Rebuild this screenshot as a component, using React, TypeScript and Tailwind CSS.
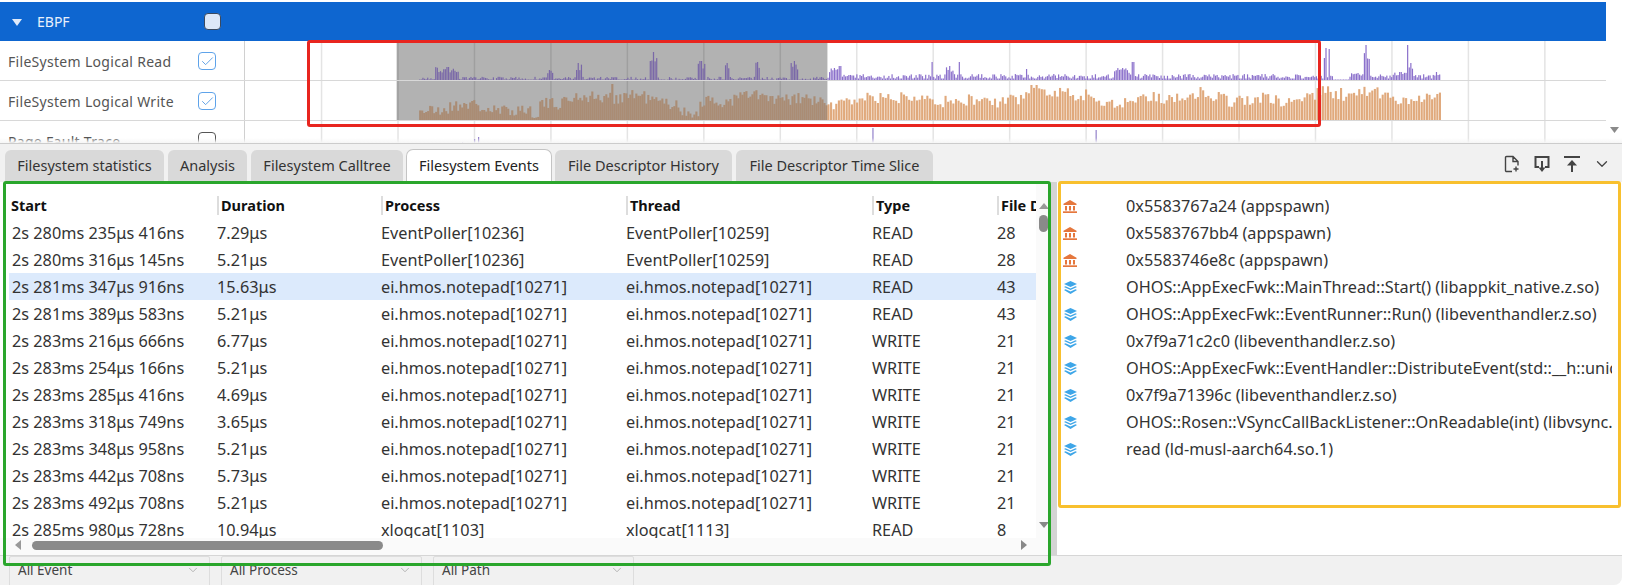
import { Check, ChevronDown } from "lucide-react";

const font = "font-['Noto_Sans','Liberation_Sans',sans-serif]";

// grid lines of the timeline, in page x
const gridXs = Array.from({ length: 17 }, (_, i) => 322.5 + i * 76.4);
const TRACK_LEFT = 246;
const SEL_START = 397.5;
const SEL_END = 828;

function rng(seed: number) {
  let s = seed;
  return () => {
    s = (s + 0x6d2b79f5) | 0;
    let t = Math.imul(s ^ (s >>> 15), 1 | s);
    t = (t + Math.imul(t ^ (t >>> 7), 61 | t)) ^ t;
    return ((t ^ (t >>> 14)) >>> 0) / 4294967296;
  };
}

type Bar = { x: number; h: number };

function readBars(): Bar[] {
  const r = rng(7);
  const bars: Bar[] = [];
  const spikes: [number, number, number][] = [
    [448, 13, 12], [550, 10, 3], [579, 17, 3], [654, 28, 4], [701, 19, 4], [727.5, 17, 2], [758, 18, 2],
    [794, 19, 4], [834, 12, 5], [840, 14, 2], [932, 18, 1], [950, 14, 4], [959, 18, 1], [1027, 11, 1],
    [1122, 12, 8], [1133, 18, 1], [1325, 32, 2], [1329, 31, 1], [1358, 7, 8], [1366, 35, 3], [1400, 8, 8],
    [1407, 35, 1], [1410, 17, 2], [1436, 8, 4],
  ];
  for (let x = 420; x < 1440; x += 1.6) {
    const quiet = x > 1332 && x < 1348;
    let h = x < SEL_END ? (r() < 0.25 ? 0.5 : r() * 3.2) : quiet ? 0.5 : r() < 0.2 ? 1.5 : 2 + r() * 4;
    for (const [sx, sh, w] of spikes) {
      if (Math.abs(x - sx) < w) h = Math.max(h, sh * (0.55 + r() * 0.45));
      if (Math.abs(x - sx) < 1) h = sh;
    }
    bars.push({ x, h });
  }
  return bars;
}

function writeBars(): Bar[] {
  const r = rng(21);
  const bars: Bar[] = [];
  let x = 420;
  while (x < 1440) {
    const slow = Math.sin(x / 23) * 3 + Math.sin(x / 9) * 2.5;
    let base = 23;
    if (x < 470) base = 11;
    else if (x < 540) base = 10;
    else if (x < 680) base = 21;
    else if (x < 700) base = 8;
    else if (x < 830) base = 20;
    else if (x < 1030) base = 21;
    else if (x < 1070) base = 28;
    else if (x < 1320) base = 22;
    else base = 25;
    const h = Math.max(2, base + slow + r() * 13 - 6.5);
    bars.push({ x, h: x > 610 && x < 614 ? 36 : Math.min(h, 35) });
    x += x < SEL_END ? 2 : 2.6;
  }
  return bars;
}

const read = readBars();
const write = writeBars();

function TrackCanvas({
  height,
  bars,
  color,
  dimColor,
  selected,
  barWidth,
}: {
  height: number;
  bars: Bar[];
  color: string;
  dimColor: string;
  selected: boolean;
  barWidth: number;
}) {
  return (
    <svg className="flex-1 block" height={height} viewBox={`${TRACK_LEFT} 0 ${1606 - TRACK_LEFT} ${height}`} preserveAspectRatio="none">
      {gridXs.map((x) => (
        <rect key={x} x={x - 0.75} y={0} width={1.5} height={height} fill="#e4e4e4" />
      ))}
      {selected && <rect x={SEL_START} y={0} width={SEL_END - SEL_START} height={height} fill="#000" opacity={0.3} />}
      {bars.map((b) => (
        <rect key={b.x} x={b.x} y={height - b.h} width={barWidth} height={b.h} fill={selected && b.x < SEL_END ? dimColor : color} />
      ))}
    </svg>
  );
}

function TrackRow({ label, children }: { label: string; children: React.ReactNode }) {
  return (
    <div className="flex h-[40px] border-b border-[#d8d8d8]">
      <div className="w-[245px] shrink-0 border-r border-[#d0d0d0] flex items-center pl-[8px] pt-[2px] relative text-[14px] tracking-[0.3px] text-[#555]">
        <span>{label}</span>
        <span className="absolute left-[198px] top-[11px] w-[18px] h-[18px] rounded-[4px] border border-[#5ea3ea] flex items-center justify-center">
          <Check size={15} strokeWidth={1.4} className="text-[#4f97e2]" />
        </span>
      </div>
      {children}
    </div>
  );
}

function Timeline() {
  return (
    <div className="h-[144px] w-[1622px] bg-white border-b border-[#cccccc] relative overflow-hidden">
      <div className="w-[1606px] pt-[2px]">
        <div className="h-[39px] bg-[#0e66d0] flex items-center relative text-white">
          <svg className="absolute left-[12px] top-[17px]" width="10" height="7" viewBox="0 0 10 7">
            <path d="M0 0h10L5 7z" fill="#dfeafa" />
          </svg>
          <span className="ml-[37px] text-[14px] text-[#e8f0fb]">EBPF</span>
          <span className="absolute left-[204px] top-[11px] w-[17px] h-[17px] rounded-[4px] bg-[#dde8f8] border border-[#3a4a60]" />
        </div>
        <TrackRow label="FileSystem Logical Read">
          <TrackCanvas height={39} bars={read} color="#8b70cb" dimColor="#7a68a8" selected barWidth={1.2} />
        </TrackRow>
        <TrackRow label="FileSystem Logical Write">
          <TrackCanvas height={39} bars={write} color="#e0a97c" dimColor="#aa8c74" selected barWidth={2.1} />
        </TrackRow>
        <div className="flex h-[24px]">
          <div className="w-[245px] shrink-0 border-r border-[#d0d0d0] pl-[8px] relative text-[14px] tracking-[0.3px] text-[#555] pt-[11px] leading-[20px]">
            Page Fault Trace
            <span className="absolute left-[198px] top-[11px] w-[18px] h-[18px] rounded-[4px] border border-[#555]" />
          </div>
          <TrackCanvas
            height={24}
            bars={[
              { x: 463, h: 3 },
              { x: 475, h: 6 },
              { x: 479, h: 8 },
              { x: 873, h: 17 },
              { x: 1096, h: 15 },
            ]}
            color="#7d68c0"
            dimColor="#7d68c0"
            selected={false}
            barWidth={1}
          />
        </div>
      </div>
      <div className="absolute left-0 right-0 bottom-0 h-[5px] bg-gradient-to-b from-transparent to-[#f6f6f6]" />
      <svg className="absolute left-[1610px] top-[127px]" width="9" height="6" viewBox="0 0 9 6">
        <path d="M0 0h9L4.5 6z" fill="#8a8a8a" />
      </svg>
    </div>
  );
}

const tabs = [
  { label: "Filesystem statistics", w: "w-[159px]" },
  { label: "Analysis", w: "w-[79px]" },
  { label: "Filesystem Calltree", w: "w-[152px]" },
  { label: "Filesystem Events", w: "w-[146px]", active: true },
  { label: "File Descriptor History", w: "w-[177px]" },
  { label: "File Descriptor Time Slice", w: "w-[197px]" },
];

function TabBar() {
  return (
    <div className="h-[38px] flex items-end justify-between pl-[5px] pr-[11px]">
      <div className="flex gap-[4px] items-end">
        {tabs.map((t) =>
          t.active ? (
            <div key={t.label} className={`${t.w} h-[33px] -mx-[1px] bg-white border border-b-0 border-[#c4c4c4] rounded-t-[7px] flex items-center justify-center text-[14.5px] text-[#222]`}>
              {t.label}
            </div>
          ) : (
            <div key={t.label} className={`${t.w} h-[32px] bg-[#d9d9d9] rounded-t-[6px] flex items-center justify-center text-[14.5px] text-[#333]`}>
              {t.label}
            </div>
          ),
        )}
      </div>
      <div className="flex items-center gap-[14px] mb-[9px]">
        <svg width="16" height="18" viewBox="0 0 16 18" fill="none" stroke="#444" strokeWidth="1.4">
          <path d="M8 16.5H2.5a1 1 0 0 1-1-1v-13a1 1 0 0 1 1-1H9l5 5v4M9 1.5v5h5" />
          <path d="M12 11.5v5M9.5 14h5" />
        </svg>
        <svg width="16" height="18" viewBox="0 0 16 18" fill="none" stroke="#444" strokeWidth="2">
          <path d="M5 12H1.5V2h13v10H11" />
          <path d="M8 6v9" />
          <path d="M4.500 12.500h7L8 17z" fill="#444" stroke="none" />
        </svg>
        <svg width="16" height="18" viewBox="0 0 16 18" fill="none" stroke="#444" strokeWidth="2">
          <path d="M0 2h16M8 17V7" />
          <path d="M3 10.500L8 5l5 5.500z" fill="#444" stroke="none" />
        </svg>
        <ChevronDown size={18} strokeWidth={1.7} className="text-[#444] -ml-[1px]" />
      </div>
    </div>
  );
}

const events = [
  ["2s 280ms 235μs 416ns", "7.29μs", "EventPoller[10236]", "EventPoller[10259]", "READ", "28"],
  ["2s 280ms 316μs 145ns", "5.21μs", "EventPoller[10236]", "EventPoller[10259]", "READ", "28"],
  ["2s 281ms 347μs 916ns", "15.63μs", "ei.hmos.notepad[10271]", "ei.hmos.notepad[10271]", "READ", "43"],
  ["2s 281ms 389μs 583ns", "5.21μs", "ei.hmos.notepad[10271]", "ei.hmos.notepad[10271]", "READ", "43"],
  ["2s 283ms 216μs 666ns", "6.77μs", "ei.hmos.notepad[10271]", "ei.hmos.notepad[10271]", "WRITE", "21"],
  ["2s 283ms 254μs 166ns", "5.21μs", "ei.hmos.notepad[10271]", "ei.hmos.notepad[10271]", "WRITE", "21"],
  ["2s 283ms 285μs 416ns", "4.69μs", "ei.hmos.notepad[10271]", "ei.hmos.notepad[10271]", "WRITE", "21"],
  ["2s 283ms 318μs 749ns", "3.65μs", "ei.hmos.notepad[10271]", "ei.hmos.notepad[10271]", "WRITE", "21"],
  ["2s 283ms 348μs 958ns", "5.21μs", "ei.hmos.notepad[10271]", "ei.hmos.notepad[10271]", "WRITE", "21"],
  ["2s 283ms 442μs 708ns", "5.73μs", "ei.hmos.notepad[10271]", "ei.hmos.notepad[10271]", "WRITE", "21"],
  ["2s 283ms 492μs 708ns", "5.21μs", "ei.hmos.notepad[10271]", "ei.hmos.notepad[10271]", "WRITE", "21"],
  ["2s 285ms 980μs 728ns", "10.94μs", "xlogcat[1103]", "xlogcat[1113]", "READ", "8"],
];

const colWidths = ["w-[208px]", "w-[164px]", "w-[245px]", "w-[246px]", "w-[125px]", "w-[39px]"];
const headers = ["Start", "Duration", "Process", "Thread", "Type", "File Descriptor"];

function EventsTable() {
  return (
    <div className="w-[1051px] relative overflow-hidden bg-white">
      <div className="w-[1027px] ml-[9px] h-[356px] overflow-hidden">
        <div className="flex h-[37px] pt-[14px] text-[14.5px] font-bold text-[#111]">
          {headers.map((h, i) => (
            <div key={h} className={`${colWidths[i]} shrink-0 h-[19px] flex items-center overflow-hidden whitespace-nowrap ${i === 0 ? "pl-[2px]" : "border-l-2 border-[#dddddd] pl-[2px]"}`}>
              {h}
            </div>
          ))}
        </div>
        {events.map((row, i) => (
          <div key={i} className={`flex h-[27px] pt-[2px] items-center text-[16.25px] text-[#333] ${i === 2 ? "bg-[#dceafc]" : ""}`}>
            {row.map((c, j) => (
              <div key={j} className={`${colWidths[j]} shrink-0 whitespace-nowrap ${j === 0 ? "pl-[3px]" : ""}`}>
                {c}
              </div>
            ))}
          </div>
        ))}
      </div>
      {/* horizontal scrollbar */}
      <div className="absolute left-0 right-0 top-[356px] bottom-0 bg-[#fafafa]" />
      <svg className="absolute left-[15px] top-[358px]" width="6" height="10" viewBox="0 0 6 10">
        <path d="M6 0v10L0 5z" fill="#999" />
      </svg>
      <div className="absolute left-[32px] top-[359px] w-[351px] h-[9px] rounded-full bg-[#8a8a8a]" />
      <svg className="absolute left-[1021px] top-[358px]" width="6" height="10" viewBox="0 0 6 10">
        <path d="M0 0v10l6-5z" fill="#888" />
      </svg>
      {/* vertical scrollbar */}
      <div className="absolute left-[1036px] top-0 right-0 bottom-0 bg-[#fafafa]" />
      <svg className="absolute left-[1039px] top-[21px]" width="10" height="6" viewBox="0 0 10 6">
        <path d="M0 6h10L5 0z" fill="#999" />
      </svg>
      <div className="absolute left-[1039px] top-[33px] w-[9px] h-[17px] rounded-full bg-[#8a8a8a]" />
      <svg className="absolute left-[1039px] top-[340px]" width="10" height="6" viewBox="0 0 10 6">
        <path d="M0 0h10L5 6z" fill="#888" />
      </svg>
    </div>
  );
}

function BankIcon() {
  return (
    <svg width="14" height="13" viewBox="0 0 14 13" fill="#e5773d" className="shrink-0">
      <path d="M7 0L13.500 3.800V5H.5V3.800z" />
      <path d="M2 6h2v4.500H2zM6 6h2v4.500H6zM10 6h2v4.500h-2z" />
      <path d="M0 11.300h14V13H0z" />
    </svg>
  );
}

function LayersIcon() {
  return (
    <svg width="13" height="13" viewBox="0 0 13 13" fill="#3ea6e8" className="shrink-0 ml-[1px]">
      <path d="M6.500 0L13 3 6.500 6 0 3z" />
      <path d="M1.500 5.200L6.500 7.500l5-2.300L13 6 6.500 9 0 6z" />
      <path d="M1.500 8.200L6.500 10.500l5-2.300L13 9l-6.500 4L0 9z" />
    </svg>
  );
}

const frames: [string, "bank" | "layers"][] = [
  ["0x5583767a24 (appspawn)", "bank"],
  ["0x5583767bb4 (appspawn)", "bank"],
  ["0x5583746e8c (appspawn)", "bank"],
  ["OHOS::AppExecFwk::MainThread::Start() (libappkit_native.z.so)", "layers"],
  ["OHOS::AppExecFwk::EventRunner::Run() (libeventhandler.z.so)", "layers"],
  ["0x7f9a71c2c0 (libeventhandler.z.so)", "layers"],
  ["OHOS::AppExecFwk::EventHandler::DistributeEvent(std::__h::unique_ptr<OHOS::AppExecFwk::InnerEvent>)", "layers"],
  ["0x7f9a71396c (libeventhandler.z.so)", "layers"],
  ["OHOS::Rosen::VSyncCallBackListener::OnReadable(int) (libvsync.z.so)", "layers"],
  ["read (ld-musl-aarch64.so.1)", "layers"],
];

function CallStack() {
  return (
    <div className="flex-1 bg-white pt-[11px] pl-[6px] pr-[10px] overflow-hidden">
      {frames.map(([text, icon]) => (
        <div key={text} className="flex items-center h-[27px] text-[16.25px] text-[#333] whitespace-nowrap overflow-hidden">
          {icon === "bank" ? <BankIcon /> : <LayersIcon />}
          <span className="ml-[49px] overflow-hidden">{text}</span>
        </div>
      ))}
    </div>
  );
}

function FilterSelect({ label }: { label: string }) {
  return (
    <div className="w-[201px] h-[32px] border border-[#dddddd] rounded-[2px] flex items-start justify-between pl-[8px] pr-[9px] pt-[3px] text-[13.5px] text-[#444]">
      <span>{label}</span>
      <ChevronDown size={14} strokeWidth={1.5} className="text-[#aaa] mt-[3px]" />
    </div>
  );
}

export default function App() {
  return (
    <div className={`${font} w-[1627px] h-[585px] relative overflow-hidden bg-white`}>
      <div className="w-[1622px] h-[585px] bg-[#f1f1f1] rounded-br-[8px] overflow-hidden">
        <Timeline />
        <TabBar />
        <div className="flex h-[373px]">
          <EventsTable />
          <div className="w-[6px] bg-[#d4d4d4]" />
          <CallStack />
        </div>
        <div className="border-t border-[#d6d6d6] flex gap-[11px] pl-[9px]">
          <FilterSelect label="All Event" />
          <FilterSelect label="All Process" />
          <FilterSelect label="All Path" />
        </div>
      </div>

      {/* annotation frames drawn over the screenshot */}
      <div className="absolute left-[307px] top-[40px] w-[1014px] h-[87px] border-[3px] border-[#e8251f] rounded-[3px]" />
      <div className="absolute left-[3px] top-[181px] w-[1048px] h-[385px] border-[3px] border-[#2aa62c] rounded-[3px]" />
      <div className="absolute left-[1058px] top-[181px] w-[563px] h-[327px] border-[3px] border-[#f8c02e] rounded-[3px]" />
    </div>
  );
}
